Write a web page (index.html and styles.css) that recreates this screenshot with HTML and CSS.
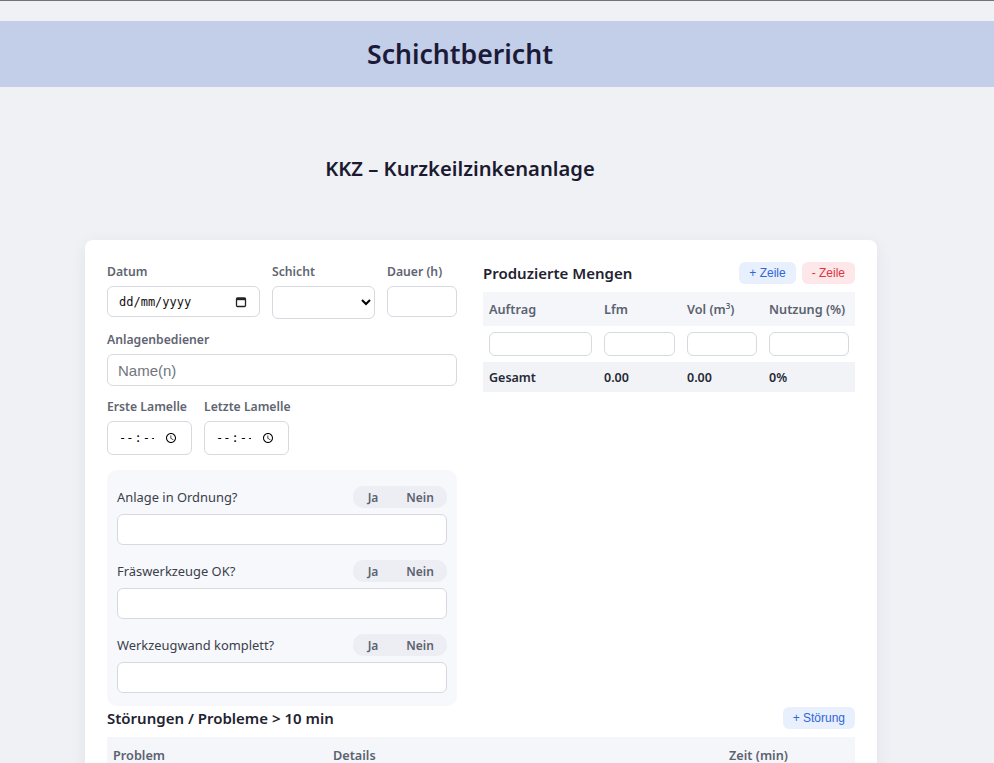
FILE: index.html
```html
<!DOCTYPE html>
<html lang="de">
<head>
    <title>Schichtbericht</title>
    <meta charset="UTF-8">
    <meta name="viewport" content="width=device-width, initial-scale=1.0">
    <link rel="stylesheet" href="styles.css">
</head>
<body>
    <div class="header">
        <h1>Schichtbericht</h1>
    </div>

    <h2 class="subtitle">KKZ – Kurzkeilzinkenanlage</h2>

    <div class="card">
        <div class="col-left">
            <div class="row-top">
                <div class="field">
                    <label for="datum">Datum</label>
                    <div class="date-box">
                        <input type="text" id="datum" placeholder="dd/mm/yyyy">
                        <svg width="12" height="12" viewBox="0 0 12 12">
                            <rect x="1.5" y="2" width="9" height="8.5" rx="1" fill="none" stroke="#222" stroke-width="1.3"/>
                            <rect x="1.5" y="2" width="9" height="2.2" fill="#222"/>
                        </svg>
                    </div>
                </div>
                <div class="field">
                    <label for="schicht">Schicht</label>
                    <select id="schicht">
                        <option></option>
                        <option>Früh</option>
                        <option>Spät</option>
                        <option>Nacht</option>
                    </select>
                </div>
                <div class="field">
                    <label for="dauer">Dauer (h)</label>
                    <input type="text" id="dauer">
                </div>
            </div>

            <div class="field">
                <label for="bediener">Anlagenbediener</label>
                <input type="text" id="bediener" placeholder="Name(n)">
            </div>

            <div class="row-time">
                <div class="field">
                    <label for="erste">Erste Lamelle</label>
                    <input type="time" id="erste">
                </div>
                <div class="field">
                    <label for="letzte">Letzte Lamelle</label>
                    <input type="time" id="letzte">
                </div>
            </div>

            <div class="checks">
                <div class="check">
                    <div class="check-head">
                        <span>Anlage in Ordnung?</span>
                        <div class="toggle"><button>Ja</button><button>Nein</button></div>
                    </div>
                    <input type="text">
                </div>
                <div class="check">
                    <div class="check-head">
                        <span>Fräswerkzeuge OK?</span>
                        <div class="toggle"><button>Ja</button><button>Nein</button></div>
                    </div>
                    <input type="text">
                </div>
                <div class="check">
                    <div class="check-head">
                        <span>Werkzeugwand komplett?</span>
                        <div class="toggle"><button>Ja</button><button>Nein</button></div>
                    </div>
                    <input type="text">
                </div>
            </div>
        </div>

        <div class="col-right">
            <div class="section-head">
                <h3>Produzierte Mengen</h3>
                <div class="actions">
                    <button class="btn-add">+ Zeile</button>
                    <button class="btn-remove">- Zeile</button>
                </div>
            </div>
            <table class="mengen">
                <thead>
                    <tr>
                        <th class="c-auftrag">Auftrag</th>
                        <th class="c-lfm">Lfm</th>
                        <th class="c-vol">Vol (m<sup>3</sup>)</th>
                        <th>Nutzung (%)</th>
                    </tr>
                </thead>
                <tbody>
                    <tr>
                        <td><input type="text"></td>
                        <td><input type="text"></td>
                        <td><input type="text"></td>
                        <td><input type="text"></td>
                    </tr>
                </tbody>
                <tfoot>
                    <tr>
                        <td>Gesamt</td>
                        <td>0.00</td>
                        <td>0.00</td>
                        <td>0%</td>
                    </tr>
                </tfoot>
            </table>
        </div>

        <div class="stoerungen">
            <div class="section-head">
                <h3>Störungen / Probleme &gt; 10 min</h3>
                <button class="btn-add">+ Störung</button>
            </div>
            <table class="probleme">
                <thead>
                    <tr>
                        <th class="c-problem">Problem</th>
                        <th>Details</th>
                        <th class="c-zeit">Zeit (min)</th>
                        <th class="c-del"></th>
                    </tr>
                </thead>
                <tbody>
                    <tr>
                        <td><input type="text"></td>
                        <td><input type="text"></td>
                        <td><input type="text"></td>
                        <td></td>
                    </tr>
                </tbody>
            </table>
        </div>
    </div>
</body>
</html>
```

FILE: styles.css
```css
body {
    font-family: "Noto Sans", "Open Sans", sans-serif;
    margin: 0;
    padding: 20px 0 40px;
    background-color: #f0f1f5;
    border-top: 1px solid #70727a;
    color: #1f2330;
}
.header {
    background-color: #c3cee8;
    height: 66px;
    display: flex;
    align-items: center;
    justify-content: center;
    padding-right: 74px;
}
.header h1 {
    margin: 0;
    font-size: 26.6px;
    font-weight: 600;
    color: #1b1a38;
}
.subtitle {
    margin: 67px 0 58px;
    padding-right: 74px;
    text-align: center;
    font-size: 20.2px;
    font-weight: 600;
    color: #1b1a30;
}
.card {
    width: 748px;
    margin-left: 85px;
    padding: 22px 22px 30px;
    background: #ffffff;
    border-radius: 8px;
    box-shadow: 0 4px 18px rgba(30, 40, 70, 0.06);
    display: grid;
    grid-template-columns: 350px 1fr;
    column-gap: 26px;
}
label {
    display: block;
    font-size: 12.2px;
    line-height: 16px;
    font-weight: 600;
    color: #5f6571;
    margin-bottom: 6px;
    white-space: nowrap;
}
input, select {
    box-sizing: border-box;
    width: 100%;
    border: 1px solid #d6d9e0;
    border-radius: 6px;
    background: #ffffff;
    font-family: "Liberation Sans", Arial, sans-serif;
    font-size: 15px;
    padding: 0 10px;
    height: 32px;
}
input::placeholder {
    color: #71757c;
}
input[type="time"] {
    font-family: "DejaVu Sans Mono", monospace;
    font-size: 12px;
}
.date-box {
    display: flex;
    align-items: center;
    box-sizing: border-box;
    height: 31px;
    background: #ffffff;
    border: 1px solid #d6d9e0;
    border-radius: 6px;
    padding-right: 12px;
}
.date-box input {
    flex: 1;
    min-width: 0;
    width: auto;
    border: none;
    background: transparent;
    height: 29px;
    padding: 0 0 0 11px;
    font-family: "DejaVu Sans Mono", monospace;
    font-size: 12px;
}
.date-box input::placeholder {
    color: #111;
}
.col-left {
    padding-top: 2px;
}
.row-top {
    display: grid;
    grid-template-columns: 153px 103px 1fr;
    gap: 12px;
    margin-bottom: 13px;
}
.row-top input {
    height: 31px;
}
.row-top select {
    height: 33px;
}
.row-time {
    display: grid;
    grid-template-columns: 85px 85px;
    gap: 12px;
    margin: 13px 0 15px;
}
.row-time input {
    height: 34px;
}
.checks {
    background: #f7f8fb;
    border-radius: 10px;
    padding: 16px 10px 13px;
}
.check + .check {
    margin-top: 15px;
}
.check-head {
    display: flex;
    align-items: center;
    justify-content: space-between;
    margin-bottom: 6px;
    font-size: 12.9px;
    color: #3a3f4b;
}
.check input {
    height: 31px;
}
.toggle {
    display: flex;
    background: #eceef3;
    border-radius: 10px;
    height: 22px;
    width: 94px;
}
.toggle button {
    flex: 1;
    border: none;
    background: none;
    font-family: inherit;
    font-size: 12px;
    font-weight: 600;
    color: #5c6270;
    padding: 0;
}
.toggle button:first-child {
    flex: 0 0 40px;
}
.section-head {
    display: flex;
    align-items: center;
    justify-content: space-between;
    height: 22px;
}
.section-head h3 {
    margin: 0;
    font-size: 15px;
    font-weight: 600;
    color: #1f2330;
}
.actions {
    display: flex;
    gap: 6px;
}
.btn-add, .btn-remove {
    border: none;
    border-radius: 6px;
    height: 22px;
    padding: 0 10px;
    font-family: "Liberation Sans", Arial, sans-serif;
    font-size: 12px;
    cursor: pointer;
}
.btn-add {
    background: #e8effd;
    color: #2f66d8;
}
.btn-remove {
    background: #fde7e8;
    color: #e0333f;
}
table {
    width: 100%;
    border-collapse: collapse;
    margin-top: 8px;
    font-size: 12.7px;
}
th {
    text-align: left;
    font-weight: 600;
    color: #5c6270;
    background: #f4f6fa;
    height: 34px;
    padding: 0 6px;
    white-space: nowrap;
}
th sup {
    font-size: 8px;
}
td {
    padding: 6px;
}
.mengen td input {
    height: 24px;
}
.mengen tfoot td {
    background: #f1f3f7;
    font-size: 12.5px;
    font-weight: 600;
    color: #262a36;
    height: 18px;
}
.c-auftrag { width: 103px; }
.c-lfm { width: 71px; }
.c-vol { width: 70px; }
.stoerungen {
    grid-column: 1 / -1;
    margin-top: 1px;
}
.stoerungen table {
    margin-top: 8px;
}
.probleme th {
    height: 36px;
}
.c-problem { width: 208px; }
.c-zeit { width: 64px; }
.c-del { width: 44px; }
```
